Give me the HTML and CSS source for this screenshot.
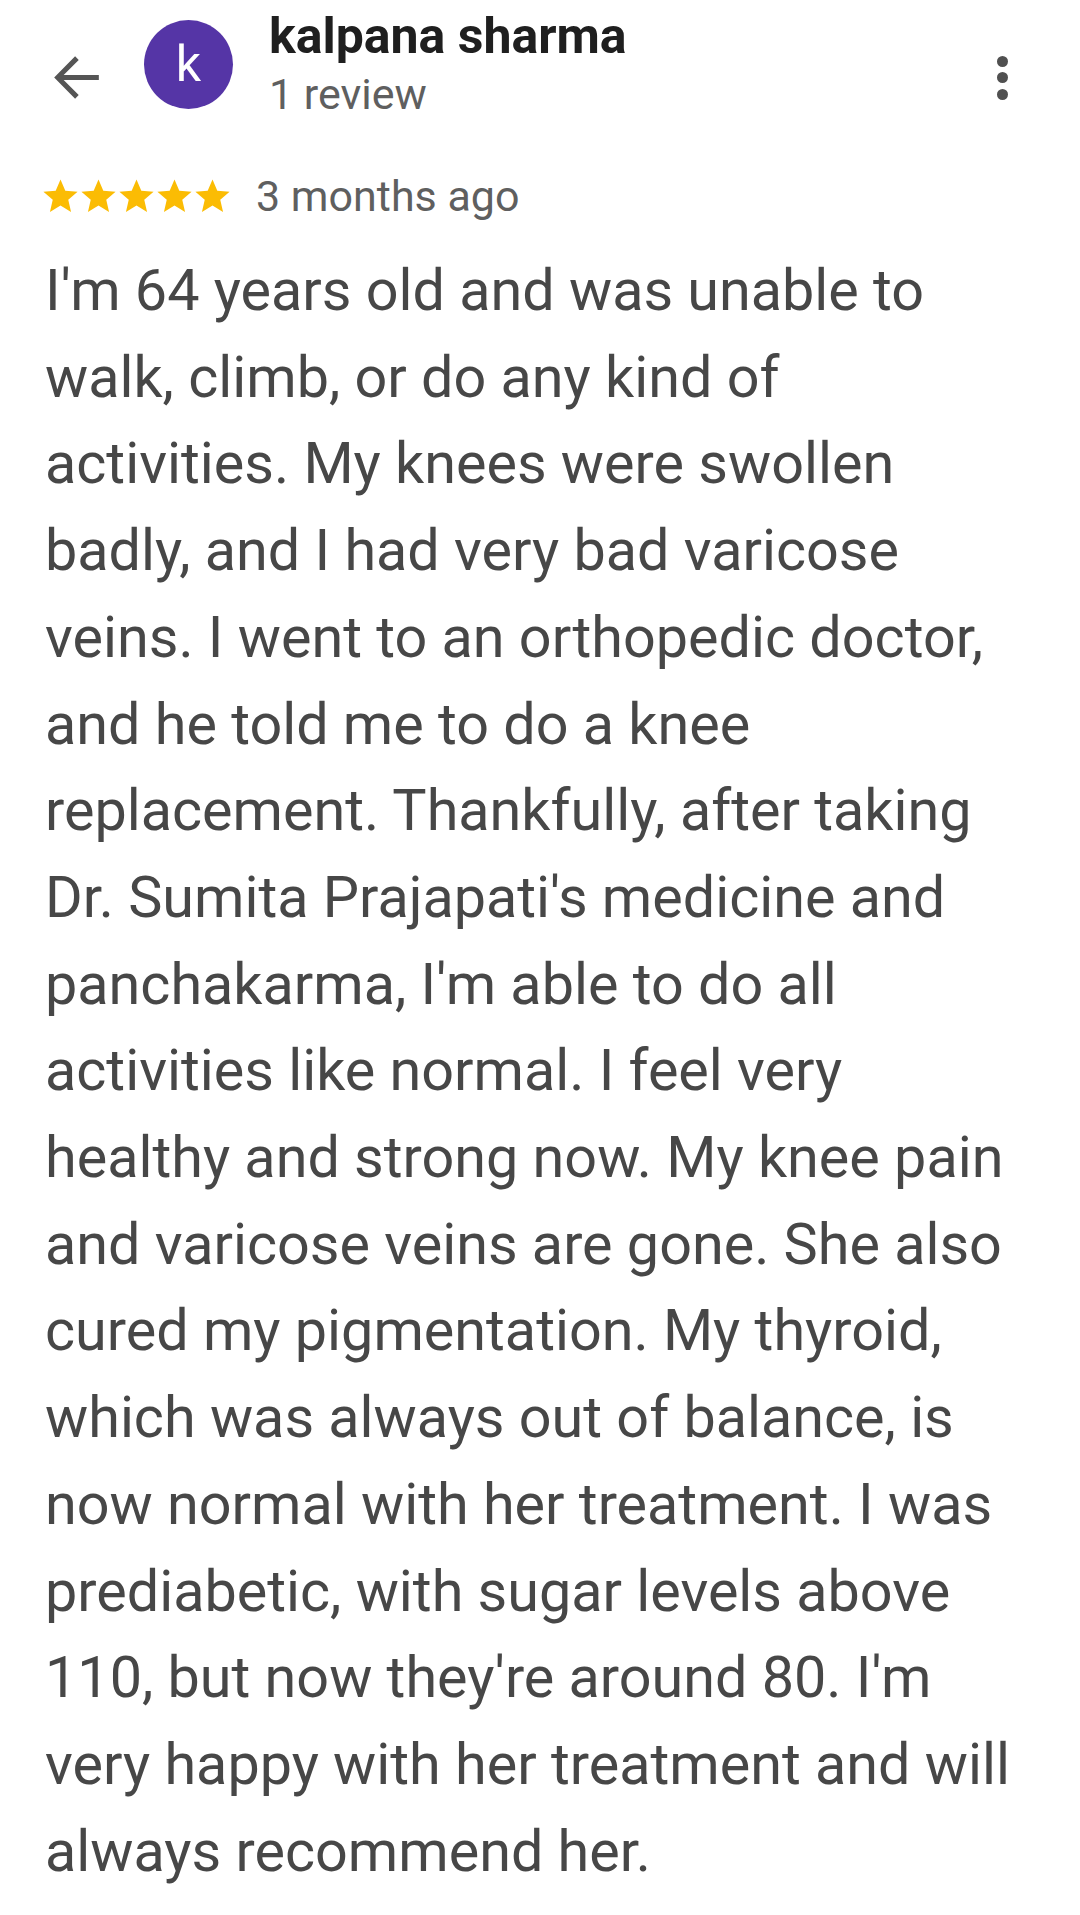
FILE: index.html
```html
<!DOCTYPE html>
<html>
<head>
<meta charset="utf-8">
<link rel="stylesheet" href="styles.css">
</head>
<body>
<div class="page">
  <header class="top">
    <div class="back">
      <svg width="67" height="67" viewBox="0 0 24 24"><path d="M20 11.1H7.4l5.4-5.4L11.5 4.4 4 12l7.5 7.6 1.3-1.3-5.4-5.4H20z" fill="#555555"/></svg>
    </div>
    <div class="avatar">k</div>
    <div class="who">
      <div class="name">kalpana sharma</div>
      <div class="count">1 review</div>
    </div>
    <div class="more">
      <span class="dot"></span><span class="dot"></span><span class="dot"></span>
    </div>
  </header>
  <div class="meta">
    <div class="stars">
      <svg viewBox="0 0 24 24"><path d="M12 17.27L18.18 21l-1.64-7.03L22 9.24l-7.19-.61L12 2 9.19 8.63 2 9.24l5.46 4.73L5.82 21z"/></svg>
      <svg viewBox="0 0 24 24"><path d="M12 17.27L18.18 21l-1.64-7.03L22 9.24l-7.19-.61L12 2 9.19 8.63 2 9.24l5.46 4.73L5.82 21z"/></svg>
      <svg viewBox="0 0 24 24"><path d="M12 17.27L18.18 21l-1.64-7.03L22 9.24l-7.19-.61L12 2 9.19 8.63 2 9.24l5.46 4.73L5.82 21z"/></svg>
      <svg viewBox="0 0 24 24"><path d="M12 17.27L18.18 21l-1.64-7.03L22 9.24l-7.19-.61L12 2 9.19 8.63 2 9.24l5.46 4.73L5.82 21z"/></svg>
      <svg viewBox="0 0 24 24"><path d="M12 17.27L18.18 21l-1.64-7.03L22 9.24l-7.19-.61L12 2 9.19 8.63 2 9.24l5.46 4.73L5.82 21z"/></svg>
    </div>
    <span class="when">3 months ago</span>
  </div>
  <p class="review">I'm 64 years old and was unable to walk, climb, or do any kind of activities. My knees were swollen badly, and I had very bad varicose veins. I went to an orthopedic doctor, and he told me to do a knee replacement. Thankfully, after taking Dr. Sumita Prajapati's medicine and panchakarma, I'm able to do all activities like normal. I feel very healthy and strong now. My knee pain and varicose veins are gone. She also cured my pigmentation. My thyroid, which was always out of balance, is now normal with her treatment. I was prediabetic, with sugar levels above 110, but now they're around 80. I'm very happy with her treatment and will always recommend her.</p>
</div>
</body>
</html>
```
FILE: styles.css
```css
html, body {
  margin: 0;
  padding: 0;
  background: #ffffff;
}
body {
  font-family: Roboto, "Noto Sans", sans-serif;
  width: 1080px;
  height: 1915px;
  overflow: hidden;
}
.top {
  display: flex;
  align-items: flex-start;
  height: 120px;
}
.back {
  width: 67px;
  height: 67px;
  margin: 44px 0 0 43px;
}
.back svg { display: block; }
.avatar {
  width: 89px;
  height: 89px;
  border-radius: 50%;
  background: #5535a6;
  color: #ffffff;
  font-size: 50px;
  line-height: 89px;
  text-align: center;
  margin: 20px 0 0 34px;
}
.who {
  margin-left: 36px;
  flex: 1;
}
.name {
  font-weight: 700;
  font-size: 50px;
  color: #1f1f1f;
  line-height: 56px;
  margin-top: 8px;
}
.count {
  font-size: 43px;
  color: #5f5f5f;
  line-height: 50px;
  margin-top: 5px;
}
.more {
  display: flex;
  flex-direction: column;
  gap: 5.5px;
  margin: 55.5px 72.5px 0 0;
}
.dot {
  width: 11px;
  height: 11px;
  border-radius: 50%;
  background: #505050;
}
.meta {
  display: flex;
  align-items: center;
  margin: 51px 0 0 40px;
  height: 50px;
}
.stars {
  display: flex;
  gap: 0;
}
.stars svg {
  width: 41px;
  height: 41px;
  margin-right: -3px;
  fill: #fbbc04;
}
.stars svg:last-child { margin-right: 0; }
.when {
  margin-left: 23px;
  font-size: 43px;
  line-height: 50px;
  color: #5f5f5f;
}
.review {
  margin: 27px 0 0 45px;
  width: 985px;
  font-size: 57.5px;
  line-height: 86.7px;
  color: #474747;
}
```
